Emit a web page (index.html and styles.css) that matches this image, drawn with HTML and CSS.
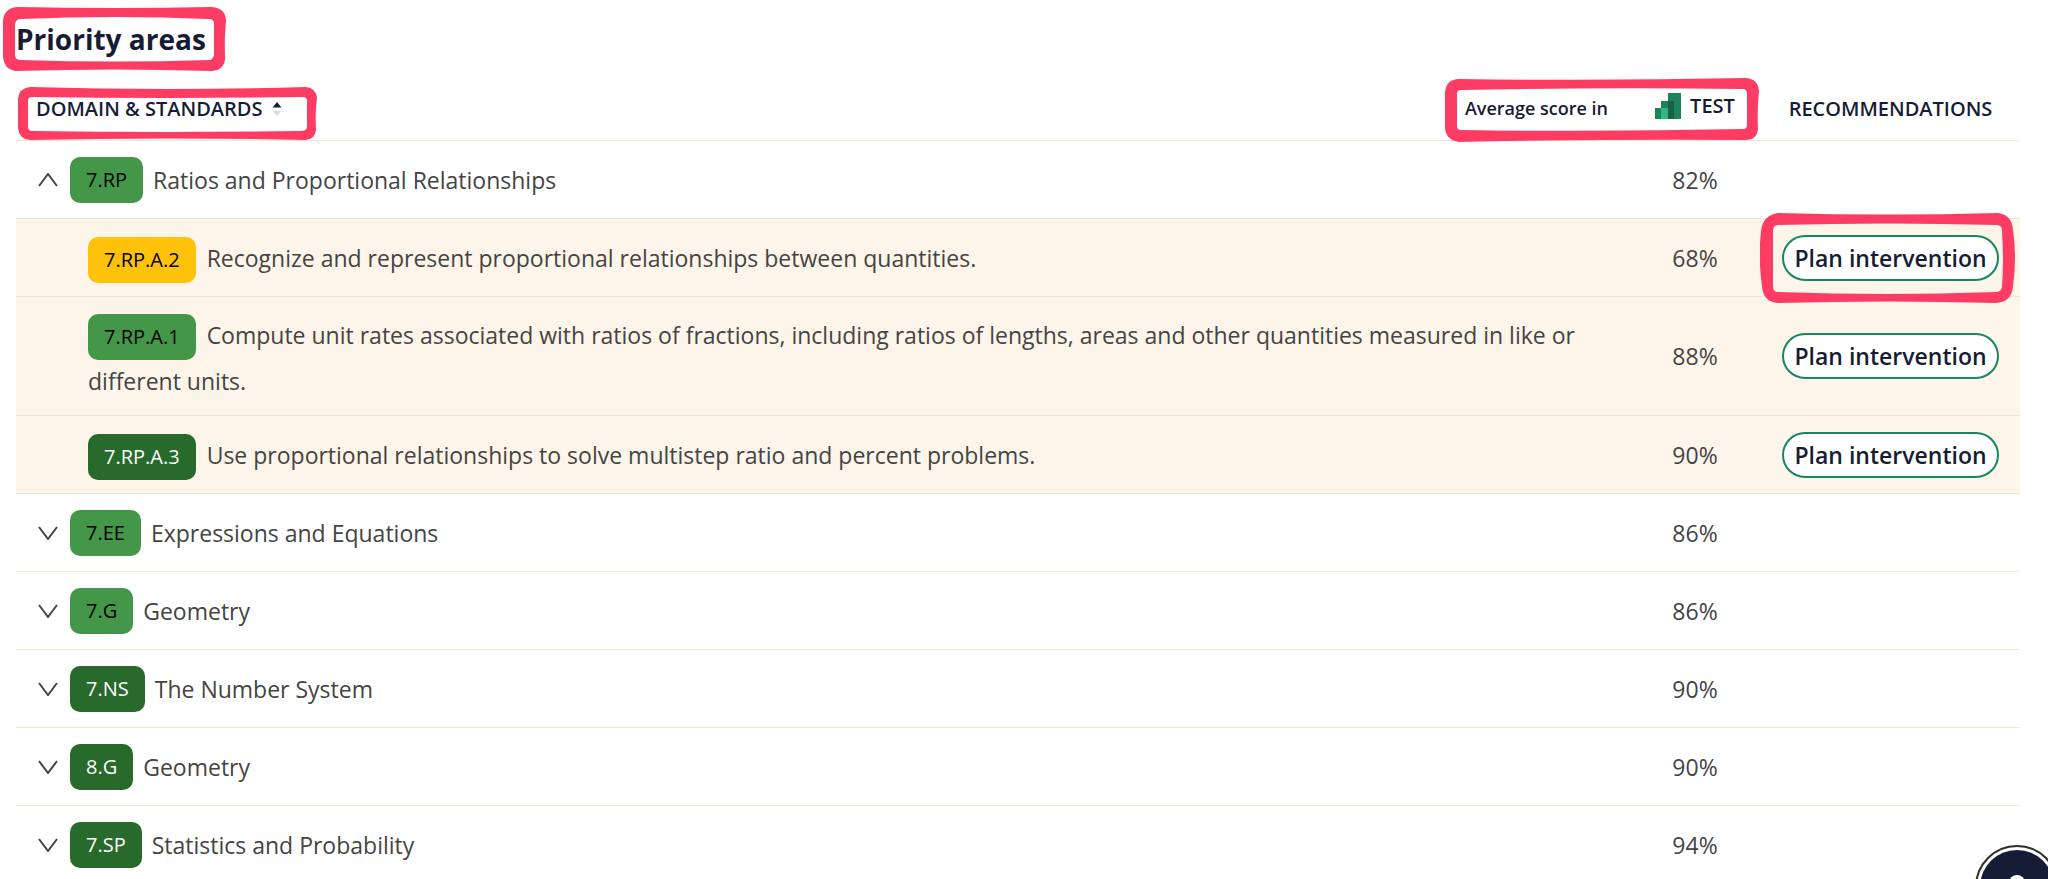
FILE: index.html
```html
<!DOCTYPE html>
<html lang="en">
<head>
<meta charset="utf-8">
<title>Priority areas</title>
<link rel="stylesheet" href="styles.css">
</head>
<body>
<main class="page">
  <h1 class="title"><span class="marked">Priority areas
    <svg class="mark mark-title" viewBox="0 0 223 64" preserveAspectRatio="none" aria-hidden="true"><path fill-rule="evenodd" d="M14 0Q112 2 209 0Q222 1 223 13Q221 32 222 52Q221 63 209 64Q112 61 12 64Q1 62 0 50V14Q1 1 14 0ZM18 12Q112 8 206 12Q211 12 211 17V48Q210 53 206 53Q112 56 18 53Q12 53 12 48V17Q13 12 18 12Z"/></svg>
  </span></h1>

  <table class="standards">
    <colgroup><col><col class="col-score"><col class="col-rec"></colgroup>
    <thead>
      <tr>
        <th scope="col">
          <div class="head-domain">
            <button class="sort marked" type="button">DOMAIN &amp; STANDARDS
              <svg class="sort-icon" viewBox="0 0 10 16" aria-hidden="true"><path fill="#171c36" d="M5 1 9.500 6.500H.5Z"/><path fill="#dedede" d="M.5 10H9.500L5 15Z"/></svg>
              <svg class="mark mark-domain" viewBox="0 0 299 53" preserveAspectRatio="none" aria-hidden="true"><path fill-rule="evenodd" d="M12 0Q150 4 288 0Q298 1 299 11Q297 26 298 42Q298 52 287 53Q150 50 12 53Q1 52 0 41V12Q1 1 12 0ZM14 10Q150 12 285 10Q289 10 289 14V40Q288 44 284 44Q150 46 14 44Q10 44 10 40V14Q10 10 14 10Z"/></svg>
            </button>
            <span class="score-label">Average score in</span>
          </div>
        </th>
        <th scope="col">
          <span class="test marked">
            <svg class="test-icon" viewBox="0 0 26 26" aria-hidden="true"><path fill="#1a845b" d="M0 15H6V8H13V0H26V26H0Z"/><path fill="#30b783" d="M6 15H13V26H6Z"/><path fill="#1b6146" d="M13 8H19V26H13Z"/></svg>
            TEST
            <svg class="mark mark-score" viewBox="0 0 314 64" preserveAspectRatio="none" aria-hidden="true"><path fill-rule="evenodd" d="M14 1Q157 3 301 0Q313 1 314 13Q312 32 313 51Q312 62 300 62Q157 61 14 64Q1 62 0 50V15Q1 1 14 1ZM16 12Q157 9 299 11Q302 12 302 16V47Q302 51 298 51Q157 54 16 52Q12 52 12 48V16Q12 12 16 12Z"/></svg>
          </span>
        </th>
        <th scope="col">RECOMMENDATIONS</th>
      </tr>
    </thead>
    <tbody>
      <tr>
        <td class="domain"><div class="line"><button class="toggle" type="button" aria-label="Collapse 7.RP" aria-expanded="true"><svg class="chevron up" viewBox="0 0 20 14"><path d="M1 1 10 13 19 1"/></svg></button><span class="badge good">7.RP</span> Ratios and Proportional Relationships</div></td>
        <td>82%</td><td></td>
      </tr>
      <tr class="standard">
        <td class="domain"><span class="badge warn">7.RP.A.2</span> Recognize and represent proportional relationships between quantities.</td>
        <td>68%</td>
        <td><button class="plan marked" type="button">Plan intervention
          <svg class="mark mark-plan" viewBox="0 0 255 90" preserveAspectRatio="none" aria-hidden="true"><path fill-rule="evenodd" d="M18 0Q127 3 238 0Q252 2 253 17Q257 45 253 73Q252 89 236 90Q127 87 18 90Q3 89 2 73Q-2 45 1 18Q3 2 18 0ZM18 12Q127 9 237 12Q242 12 242 18Q244 45 242 74Q241 79 236 79Q127 83 18 79Q13 79 13 73V18Q13 12 18 12Z"/></svg>
        </button></td>
      </tr>
      <tr class="standard">
        <td class="domain"><span class="badge good">7.RP.A.1</span> Compute unit rates associated with ratios of fractions, including ratios of lengths, areas and other quantities measured in like or different units.</td>
        <td>88%</td>
        <td><button class="plan" type="button">Plan intervention</button></td>
      </tr>
      <tr class="standard">
        <td class="domain"><span class="badge great">7.RP.A.3</span> Use proportional relationships to solve multistep ratio and percent problems.</td>
        <td>90%</td>
        <td><button class="plan" type="button">Plan intervention</button></td>
      </tr>
      <tr>
        <td class="domain"><div class="line"><button class="toggle" type="button" aria-label="Expand 7.EE" aria-expanded="false"><svg class="chevron" viewBox="0 0 20 14"><path d="M1 1 10 13 19 1"/></svg></button><span class="badge good">7.EE</span> Expressions and Equations</div></td>
        <td>86%</td><td></td>
      </tr>
      <tr>
        <td class="domain"><div class="line"><button class="toggle" type="button" aria-label="Expand 7.G" aria-expanded="false"><svg class="chevron" viewBox="0 0 20 14"><path d="M1 1 10 13 19 1"/></svg></button><span class="badge good">7.G</span> Geometry</div></td>
        <td>86%</td><td></td>
      </tr>
      <tr>
        <td class="domain"><div class="line"><button class="toggle" type="button" aria-label="Expand 7.NS" aria-expanded="false"><svg class="chevron" viewBox="0 0 20 14"><path d="M1 1 10 13 19 1"/></svg></button><span class="badge great">7.NS</span> The Number System</div></td>
        <td>90%</td><td></td>
      </tr>
      <tr>
        <td class="domain"><div class="line"><button class="toggle" type="button" aria-label="Expand 8.G" aria-expanded="false"><svg class="chevron" viewBox="0 0 20 14"><path d="M1 1 10 13 19 1"/></svg></button><span class="badge great">8.G</span> Geometry</div></td>
        <td>90%</td><td></td>
      </tr>
      <tr>
        <td class="domain"><div class="line"><button class="toggle" type="button" aria-label="Expand 7.SP" aria-expanded="false"><svg class="chevron" viewBox="0 0 20 14"><path d="M1 1 10 13 19 1"/></svg></button><span class="badge great">7.SP</span> Statistics and Probability</div></td>
        <td>94%</td><td></td>
      </tr>
    </tbody>
  </table>
</main>

<button class="help" type="button" aria-label="Help">
  <svg viewBox="0 0 84 84" aria-hidden="true"><circle cx="42" cy="42" r="41" fill="#fff" stroke="#2d2d2d" stroke-width="2"/><circle cx="42" cy="42" r="37" fill="#171c36"/><circle cx="42" cy="38" r="8" fill="#fff"/></svg>
</button>
</body>
</html>
```
FILE: styles.css
```css
* { box-sizing: border-box; }

body {
  margin: 0;
  height: 100vh;
  overflow: hidden;
  background: #fff;
  color: #444;
  font-family: "Open Sans", "Noto Sans", sans-serif;
  font-size: 23px;
}

button {
  margin: 0;
  padding: 0;
  border: 0;
  background: none;
  color: inherit;
  font: inherit;
  cursor: pointer;
}

.page { padding: 19px 28px 0 16px; }

.title {
  margin: 0;
  color: #171c36;
  font-size: 28px;
  line-height: 40px;
  font-weight: 700;
}

.standards {
  width: 100%;
  border-collapse: separate;
  border-spacing: 0;
  table-layout: fixed;
}
.col-score { width: 132px; }
.col-rec { width: 259px; }

th {
  height: 82px;
  padding: 19px 0 0;
  border-bottom: 1px solid #eee7d2;
  color: #171c36;
  font-size: 20px;
  line-height: 28px;
  font-weight: 600;
  text-align: center;
  vertical-align: middle;
  white-space: nowrap;
}

.head-domain {
  display: flex;
  align-items: flex-start;
  justify-content: space-between;
  padding: 0 21px 0 20px;
}
.sort {
  display: flex;
  align-items: center;
  gap: 10px;
}
.sort-icon { width: 10px; height: 16px; }
.score-label {
  font-size: 18px;
  line-height: 26px;
}

.test {
  display: inline-flex;
  align-items: center;
  gap: 9px;
}
.test-icon { width: 26px; height: 26px; }

td {
  height: 78px;
  padding: 0;
  border-bottom: 1px solid #eee7d2;
  line-height: 42px;
  text-align: center;
  vertical-align: middle;
}
.domain {
  padding: 0 20px;
  text-align: left;
}
.standard td { background: #fdf5e9; }
.standard .domain { padding: 17px 20px 13px 72px; }

.line {
  display: flex;
  align-items: center;
  gap: 10px;
}
.toggle {
  display: grid;
  place-items: center;
  width: 24px;
  height: 24px;
}
.chevron {
  width: 20px;
  height: 14px;
  fill: none;
  stroke: #444;
  stroke-width: 2;
}
.chevron.up { transform: rotate(180deg); }

.badge {
  display: inline-block;
  margin-right: 5px;
  padding: 0 16px;
  border-radius: 10px;
  font-size: 20px;
  line-height: 46px;
}
.line .badge { margin-right: 0; }
.good { background: #449648; color: #000; }
.great { background: #276a2c; color: #fff; }
.warn { background: #ffc20a; color: #000; }

.plan {
  width: 217px;
  height: 46px;
  border: 2px solid #17875f;
  border-radius: 23px;
  background: #fff;
  color: #171c36;
  font-weight: 600;
  line-height: 42px;
  white-space: nowrap;
  vertical-align: middle;
}

/* Hand-drawn highlight frames laid over the content */
.marked { position: relative; }
.mark {
  position: absolute;
  fill: #fc3c63;
  pointer-events: none;
}
.mark-title { left: -13px; top: -13px; width: 223px; height: 64px; }
.mark-domain { left: -18px; top: -8px; width: 299px; height: 53px; }
.mark-score { left: -210px; top: -14px; width: 314px; height: 64px; }
.mark-plan { left: -24px; top: -24px; width: 255px; height: 90px; }

.help {
  position: fixed;
  right: -11px;
  bottom: -50px;
  width: 84px;
  height: 84px;
}
```
